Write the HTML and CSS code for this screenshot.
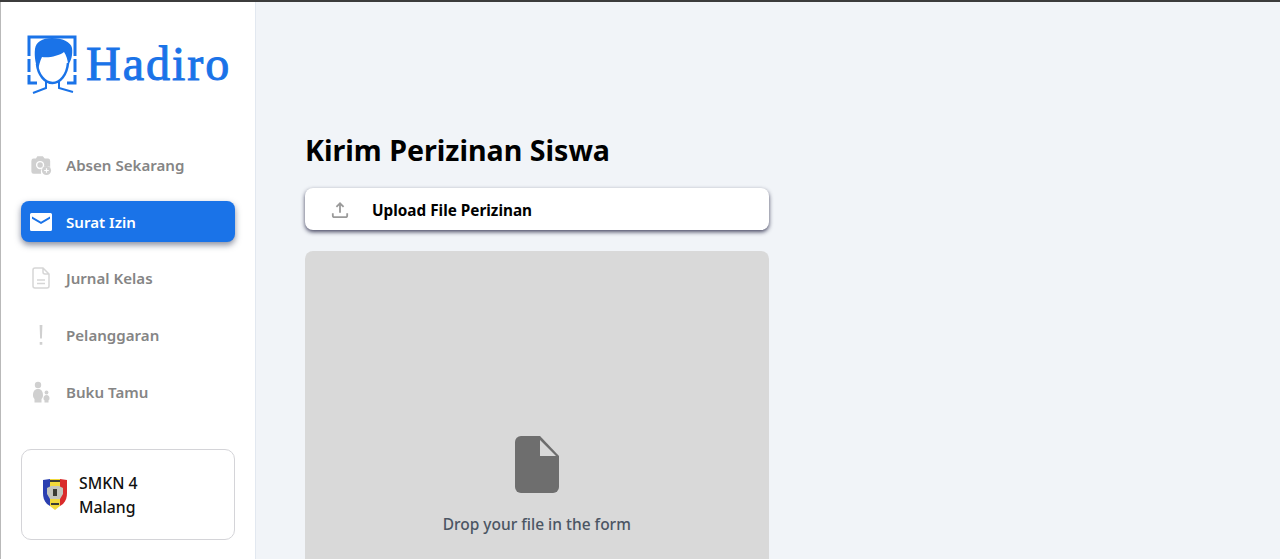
FILE: index.html
```html
<!DOCTYPE html>
<html lang="en">
<head>
    <meta charset="UTF-8">
    <title>Hadiro</title>
    <link rel="stylesheet" href="styles.css">
</head>
<body>
<div class="app">
    <aside class="sidebar">
        <div class="brand">
            <svg class="brand-mark" width="50" height="60" viewBox="0 0 50 60">
                <path class="frame" d="M2 21V2H48V21M2 24V37M48 24V37M2 40V48H10M48 40V48H40"/>
                <path class="frame-thin" d="M6 58L19 53V46M46 57L32 53V46"/>
                <path class="hair" d="M25 3C15 3 9 7 8 14C7 22 9 30 11 35C12 30 13 26 15 22C22 23 32 21 37 17C39 20 41 25 41 30C44 26 46 20 45 13C44 7 35 3 25 3Z"/>
                <path class="face" d="M10 29C11 40 18 48 25.500 48C33 48 40 40 41 28"/>
            </svg>
            <span class="brand-name">Hadiro</span>
        </div>

        <nav class="menu">
            <a class="menu-item">
                <svg class="menu-icon" viewBox="0 0 24 24"><path d="M8 2.500h6l2 2.500h4a2.500 2.500 0 0 1 2 2.500v6.700a6.500 6.500 0 0 0-9.800 7.300H4a2.500 2.500 0 0 1-2.500-2.500V7.500A2.500 2.500 0 0 1 4 5h2.500z"/><circle cx="11" cy="12" r="4.500" fill="#fff"/><circle cx="11" cy="12" r="3"/><circle cx="18" cy="18" r="5"/><path d="M18 15.500v5M15.500 18h5" stroke="#fff" stroke-width="1.300" fill="none"/></svg>
                <span>Absen Sekarang</span>
            </a>
            <a class="menu-item active">
                <svg class="menu-icon" viewBox="0 0 22 18"><path d="M1.500 0h19A1.500 1.500 0 0 1 22 1.500v15a1.500 1.500 0 0 1-1.500 1.500h-19A1.500 1.500 0 0 1 0 16.500v-15A1.500 1.500 0 0 1 1.500 0zM2 3.500v2.300l9 5.200 9-5.200V3.500l-9 5.200z" fill-rule="evenodd"/></svg>
                <span>Surat Izin</span>
            </a>
            <a class="menu-item">
                <svg class="menu-icon outline" viewBox="0 0 18 22"><path d="M3 1h8l6 6v12a2 2 0 0 1-2 2H3a2 2 0 0 1-2-2V3a2 2 0 0 1 2-2zM11 1v4a2 2 0 0 0 2 2h4M5 13h8M5 16.500h8"/></svg>
                <span>Jurnal Kelas</span>
            </a>
            <a class="menu-item">
                <svg class="menu-icon" viewBox="0 0 22 22"><path d="M9.600 1h2.800l-.5 13.500h-1.800zM9.700 18h2.600v2.800H9.700z"/></svg>
                <span>Pelanggaran</span>
            </a>
            <a class="menu-item">
                <svg class="menu-icon" viewBox="0 0 22 22"><circle cx="8" cy="4" r="3.200"/><path d="M8 8c3.500 0 5 2.500 5 6.500 0 2-1 3-1.500 3.500v3.500h-7V18C4 17.500 3 16.500 3 14.500 3 10.500 4.500 8 8 8z"/><circle cx="16.500" cy="11.500" r="1.900"/><path d="M16.500 14c2 0 3 1.500 3 3.500 0 1-.5 1.500-1 2v2h-4v-2c-.5-.5-1-1-1-2 0-2 1-3.500 3-3.500z"/></svg>
                <span>Buku Tamu</span>
            </a>
        </nav>

        <div class="school">
            <svg class="school-logo" width="26" height="33" viewBox="0 0 26 33">
                <path d="M1 2L8 1V28L5 26C2 23 1 19 1 15z" fill="#2b3fb0"/>
                <path d="M18 1L25 2V15C25 19 24 23 21 26L18 28z" fill="#d92b2b"/>
                <path d="M8 1H18V28L13 32L8 28z" fill="#f1d93a"/>
                <path d="M5 10L9 8h8l4 2v6l-3 5h-10l-3-5z" fill="#c3c5bd"/>
                <path d="M11 11h4v7h-4zM8 2h10v2H8zM9 25h8v2H9z" fill="#3a3c34"/>
            </svg>
            <div class="school-name">SMKN 4<br>Malang</div>
        </div>
    </aside>

    <main class="content">
        <h1>Kirim Perizinan Siswa</h1>

        <button class="upload-btn">
            <svg class="upload-icon" width="18" height="18" viewBox="0 0 20 20"><path d="M10 13V3M6 6.500L10 2.500l4 4M2 13.500v2.500a2 2 0 0 0 2 2h12a2 2 0 0 0 2-2v-2.500"/></svg>
            <span>Upload File Perizinan</span>
        </button>

        <div class="dropzone">
            <svg width="44" height="58" viewBox="0 0 44 58"><path d="M6 0H25L44 20V51A6 6 0 0 1 38 57H6A6 6 0 0 1 0 51V6A6 6 0 0 1 6 0Z" fill="#6e6e6e"/><path d="M25 4V20H41Z" fill="#d9d9d9"/></svg>
            <p>Drop your file in the form</p>
        </div>
    </main>
</div>
</body>
</html>
```

FILE: styles.css
```css
* {
    box-sizing: border-box;
}

html, body {
    height: 100%;
}

body {
    margin: 0;
    overflow: hidden;
    font-family: "Noto Sans", "Open Sans", sans-serif;
    background: #f1f4f8;
    border-top: 2px solid #3c3c3c;
}

.app {
    display: flex;
    height: 557px;
}

.sidebar {
    width: 256px;
    flex-shrink: 0;
    padding: 0 20px 0 20px;
    background: #fff;
    border-left: 1px solid #b9b9b9;
    border-right: 1px solid #e2e8f0;
    display: flex;
    flex-direction: column;
}

.brand {
    display: flex;
    align-items: center;
    gap: 9px;
    height: 62px;
    margin: 32px 0 0 6px;
}

.brand-mark {
    flex-shrink: 0;
}

.brand-mark .frame {
    fill: none;
    stroke: #1a73e8;
    stroke-width: 3;
}

.brand-mark .frame-thin {
    fill: none;
    stroke: #1a73e8;
    stroke-width: 2;
}

.brand-mark .hair {
    fill: #1a73e8;
}

.brand-mark .face {
    fill: none;
    stroke: #1a73e8;
    stroke-width: 2.500;
}

.brand-name {
    margin-top: -2px;
    font-family: "Liberation Serif", serif;
    font-size: 48px;
    line-height: 1;
    color: #1a73e8;
    -webkit-text-stroke: 1px #1a73e8;
    letter-spacing: 2px;
}

.menu {
    display: flex;
    flex-direction: column;
    gap: 16px;
    margin-top: 48px;
}

.menu-item {
    display: flex;
    align-items: center;
    gap: 14px;
    height: 40.750px;
    padding: 1px 0 0 9px;
    border-radius: 8px;
    font-size: 15.100px;
    font-weight: 600;
    color: #858585;
}

.menu-icon {
    width: 22px;
    height: 22px;
    fill: #d0d0d0;
    flex-shrink: 0;
}

.menu-icon.outline {
    fill: none;
    stroke: #d6d6d6;
    stroke-width: 1.500;
}

.menu-item.active {
    background: #1a73e8;
    color: #fff;
    box-shadow: 0 3px 6px rgba(40, 50, 80, 0.55);
}

.menu-item.active .menu-icon {
    fill: #fff;
}

.school {
    display: flex;
    align-items: center;
    gap: 11px;
    height: 91px;
    margin-top: 37px;
    padding: 2px 0 0 20px;
    border: 1px solid #d4d4d8;
    border-radius: 10px;
}

.school-logo {
    flex-shrink: 0;
    margin-top: -2px;
}

.school-name {
    font-size: 15.800px;
    font-weight: 500;
    line-height: 24px;
    color: #111;
}

.content {
    flex: 1;
    padding: 128px 0 0 49px;
}

h1 {
    margin: 0;
    font-size: 28.600px;
    line-height: 40px;
    font-weight: 700;
    color: #000;
}

.upload-btn {
    display: flex;
    align-items: center;
    gap: 23px;
    width: 463.500px;
    height: 42px;
    margin-top: 18px;
    padding: 1px 0 0 26px;
    border: 0;
    border-radius: 8px;
    background: #fff;
    font-family: inherit;
    font-size: 15.300px;
    font-weight: 700;
    color: #000;
    box-shadow: 0 2px 4px rgba(40, 40, 70, 0.85);
}

.upload-icon {
    fill: none;
    stroke: #9a9a9a;
    stroke-width: 2;
    flex-shrink: 0;
}

.dropzone {
    display: flex;
    flex-direction: column;
    align-items: center;
    width: 463.500px;
    height: 320px;
    margin-top: 21px;
    padding-top: 185px;
    border-radius: 8px;
    background: #d9d9d9;
}

.dropzone p {
    margin: 19px 0 0;
    font-size: 15.500px;
    font-weight: 500;
    color: #4b5563;
}
```
